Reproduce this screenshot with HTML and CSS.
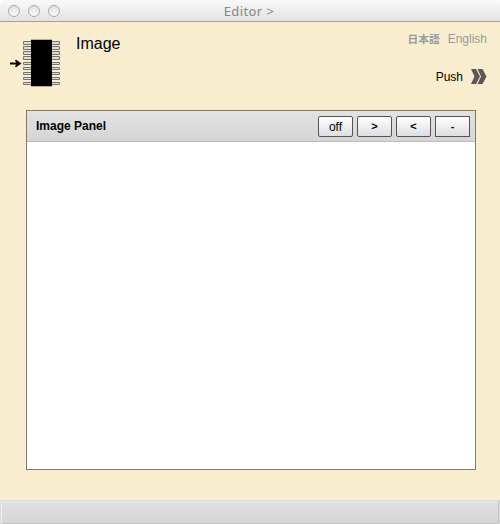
FILE: index.html
```html
<!DOCTYPE html>
<html lang="en">
<head>
<meta charset="utf-8">
<title>Editor</title>
<link rel="stylesheet" href="styles.css">
</head>
<body>
<div class="window">
  <div class="titlebar">
    <div class="lights"><i></i><i></i><i></i></div>
    <span class="title">Editor &gt;</span>
  </div>
  <main class="content">
    <header class="header">
      <svg class="chip" width="52" height="50" viewBox="0 0 52 50">
        <g fill="#dcdcdc" stroke="#77736b" stroke-width="1">
          <path d="M13.5 3.5h36v3h-36zM13.5 8.5h36v3h-36zM13.5 13.5h36v3h-36zM13.5 18.5h36v3h-36zM13.5 24.5h36v2h-36zM13.5 29.5h36v2h-36zM13.5 34.5h36v2h-36zM13.5 39.5h36v2h-36zM13.5 44.5h36v2h-36z"/>
        </g>
        <path fill="#b9ad91" d="M21 1h21v48H21z"/>
        <path fill="#000" d="M21 2h21v46H21z"/>
        <path fill="#000" d="M0 24.500h6L5 22h1.500L11.500 25.400 6.500 29H5l1-2.500H0z"/>
      </svg>
      <h1 class="name">Image</h1>
      <div class="actions">
        <div class="langs"><span class="ja" lang="ja">日本語</span><span>English</span></div>
        <div class="push">
          <span>Push</span>
          <svg width="16" height="16" viewBox="0 0 16 16"><path fill="#5b5759" d="M0 0h5l4 7.500L5 15H0l3.500-7.500zM6.500 0h5l4 7.500-4 7.500h-5L10 7.500z"/></svg>
        </div>
      </div>
    </header>
    <section class="panel">
      <div class="panel-head">
        <h2>Image Panel</h2>
        <div class="buttons">
          <button class="off">off</button><button>&gt;</button><button>&lt;</button><button class="square">-</button>
        </div>
      </div>
      <div class="panel-body"></div>
    </section>
  </main>
  <footer class="footer"><div class="status"></div></footer>
</div>
</body>
</html>
```

FILE: styles.css
```css
* { box-sizing: border-box; }
body {
  margin: 0;
  background: #fff;
  font-family: "Liberation Sans", Arial, sans-serif;
  color: #000;
}
.window {
  width: 500px;
  height: 524px;
  display: flex;
  flex-direction: column;
  border-radius: 5px 5px 0 0;
  overflow: hidden;
}
.titlebar {
  height: 22px;
  display: grid;
  grid-template-columns: 68px 1fr 70px;
  align-items: center;
  background: linear-gradient(#f9f9f9, #e2e2e2);
  border-bottom: 1px solid #a0a0a0;
}
.lights {
  display: flex;
  gap: 8px;
  padding-left: 8px;
}
.lights i {
  width: 12px;
  height: 12px;
  border-radius: 50%;
  border: 1px solid #a9a9a9;
  background: linear-gradient(#e2e2e2, #fafafa);
}
.title {
  text-align: center;
  font: 13px/20px "Noto Sans", sans-serif;
  letter-spacing: 0.4px;
  color: #858585;
  padding-top: 1px;
}
.content {
  height: 478px;
  background: #f9edd0;
  padding: 0 24px 0 26px;
}
.header {
  height: 88px;
  display: flex;
  margin: 0 -11px 0 -16px;
}
.chip {
  display: block;
  margin-top: 16px;
}
.name {
  margin: 12px 0 0 14px;
  font-size: 16px;
  line-height: 20px;
  font-weight: 400;
}
.actions {
  margin-left: auto;
  padding-top: 9px;
  display: flex;
  flex-direction: column;
  align-items: flex-end;
  font-size: 12px;
  line-height: 16px;
}
.langs {
  display: flex;
  gap: 8px;
  color: #999;
}
.ja {
  font-family: "Noto Sans CJK JP", sans-serif;
  font-size: 10.7px;
  font-weight: 700;
  line-height: 15px;
}
.push {
  display: flex;
  gap: 8px;
  align-items: center;
  margin-top: 22px;
}
.push svg { display: block; }
.panel {
  width: 450px;
  height: 360px;
  border: 1px solid #827867;
  display: flex;
  flex-direction: column;
}
.panel-head {
  height: 31px;
  display: flex;
  align-items: center;
  justify-content: space-between;
  padding: 0 5px 0 9px;
  background: linear-gradient(#e2e2e2, #d5d5d5);
  border-bottom: 1px solid #bcbcbc;
}
.panel-head h2 {
  margin: 0;
  font-size: 12px;
  line-height: 16px;
}
.panel-body {
  flex: 1;
  background: #fff;
}
.buttons {
  display: flex;
  gap: 4px;
}
.buttons button {
  width: 35px;
  height: 21px;
  margin-top: 1px;
  padding: 0;
  border: 1px solid #555;
  border-radius: 2px;
  background: linear-gradient(#fff, #dedee2);
  font: bold 11px/17px "Liberation Sans", Arial, sans-serif;
  color: #000;
}
.buttons .off { font-weight: 400; font-size: 12px; padding-top: 1px; }
.buttons .square { border-radius: 0; }
.footer {
  height: 24px;
  padding: 1px 1px 0;
  background: #dadada;
}
.status {
  height: 23px;
  border: 1px solid #c2c2c2;
  border-top-color: #e7e7e7;
  border-left-color: #eee;
  border-radius: 1px 1px 4px 4px;
  background: linear-gradient(#e0e0e0, #d6d6d6);
}
```
